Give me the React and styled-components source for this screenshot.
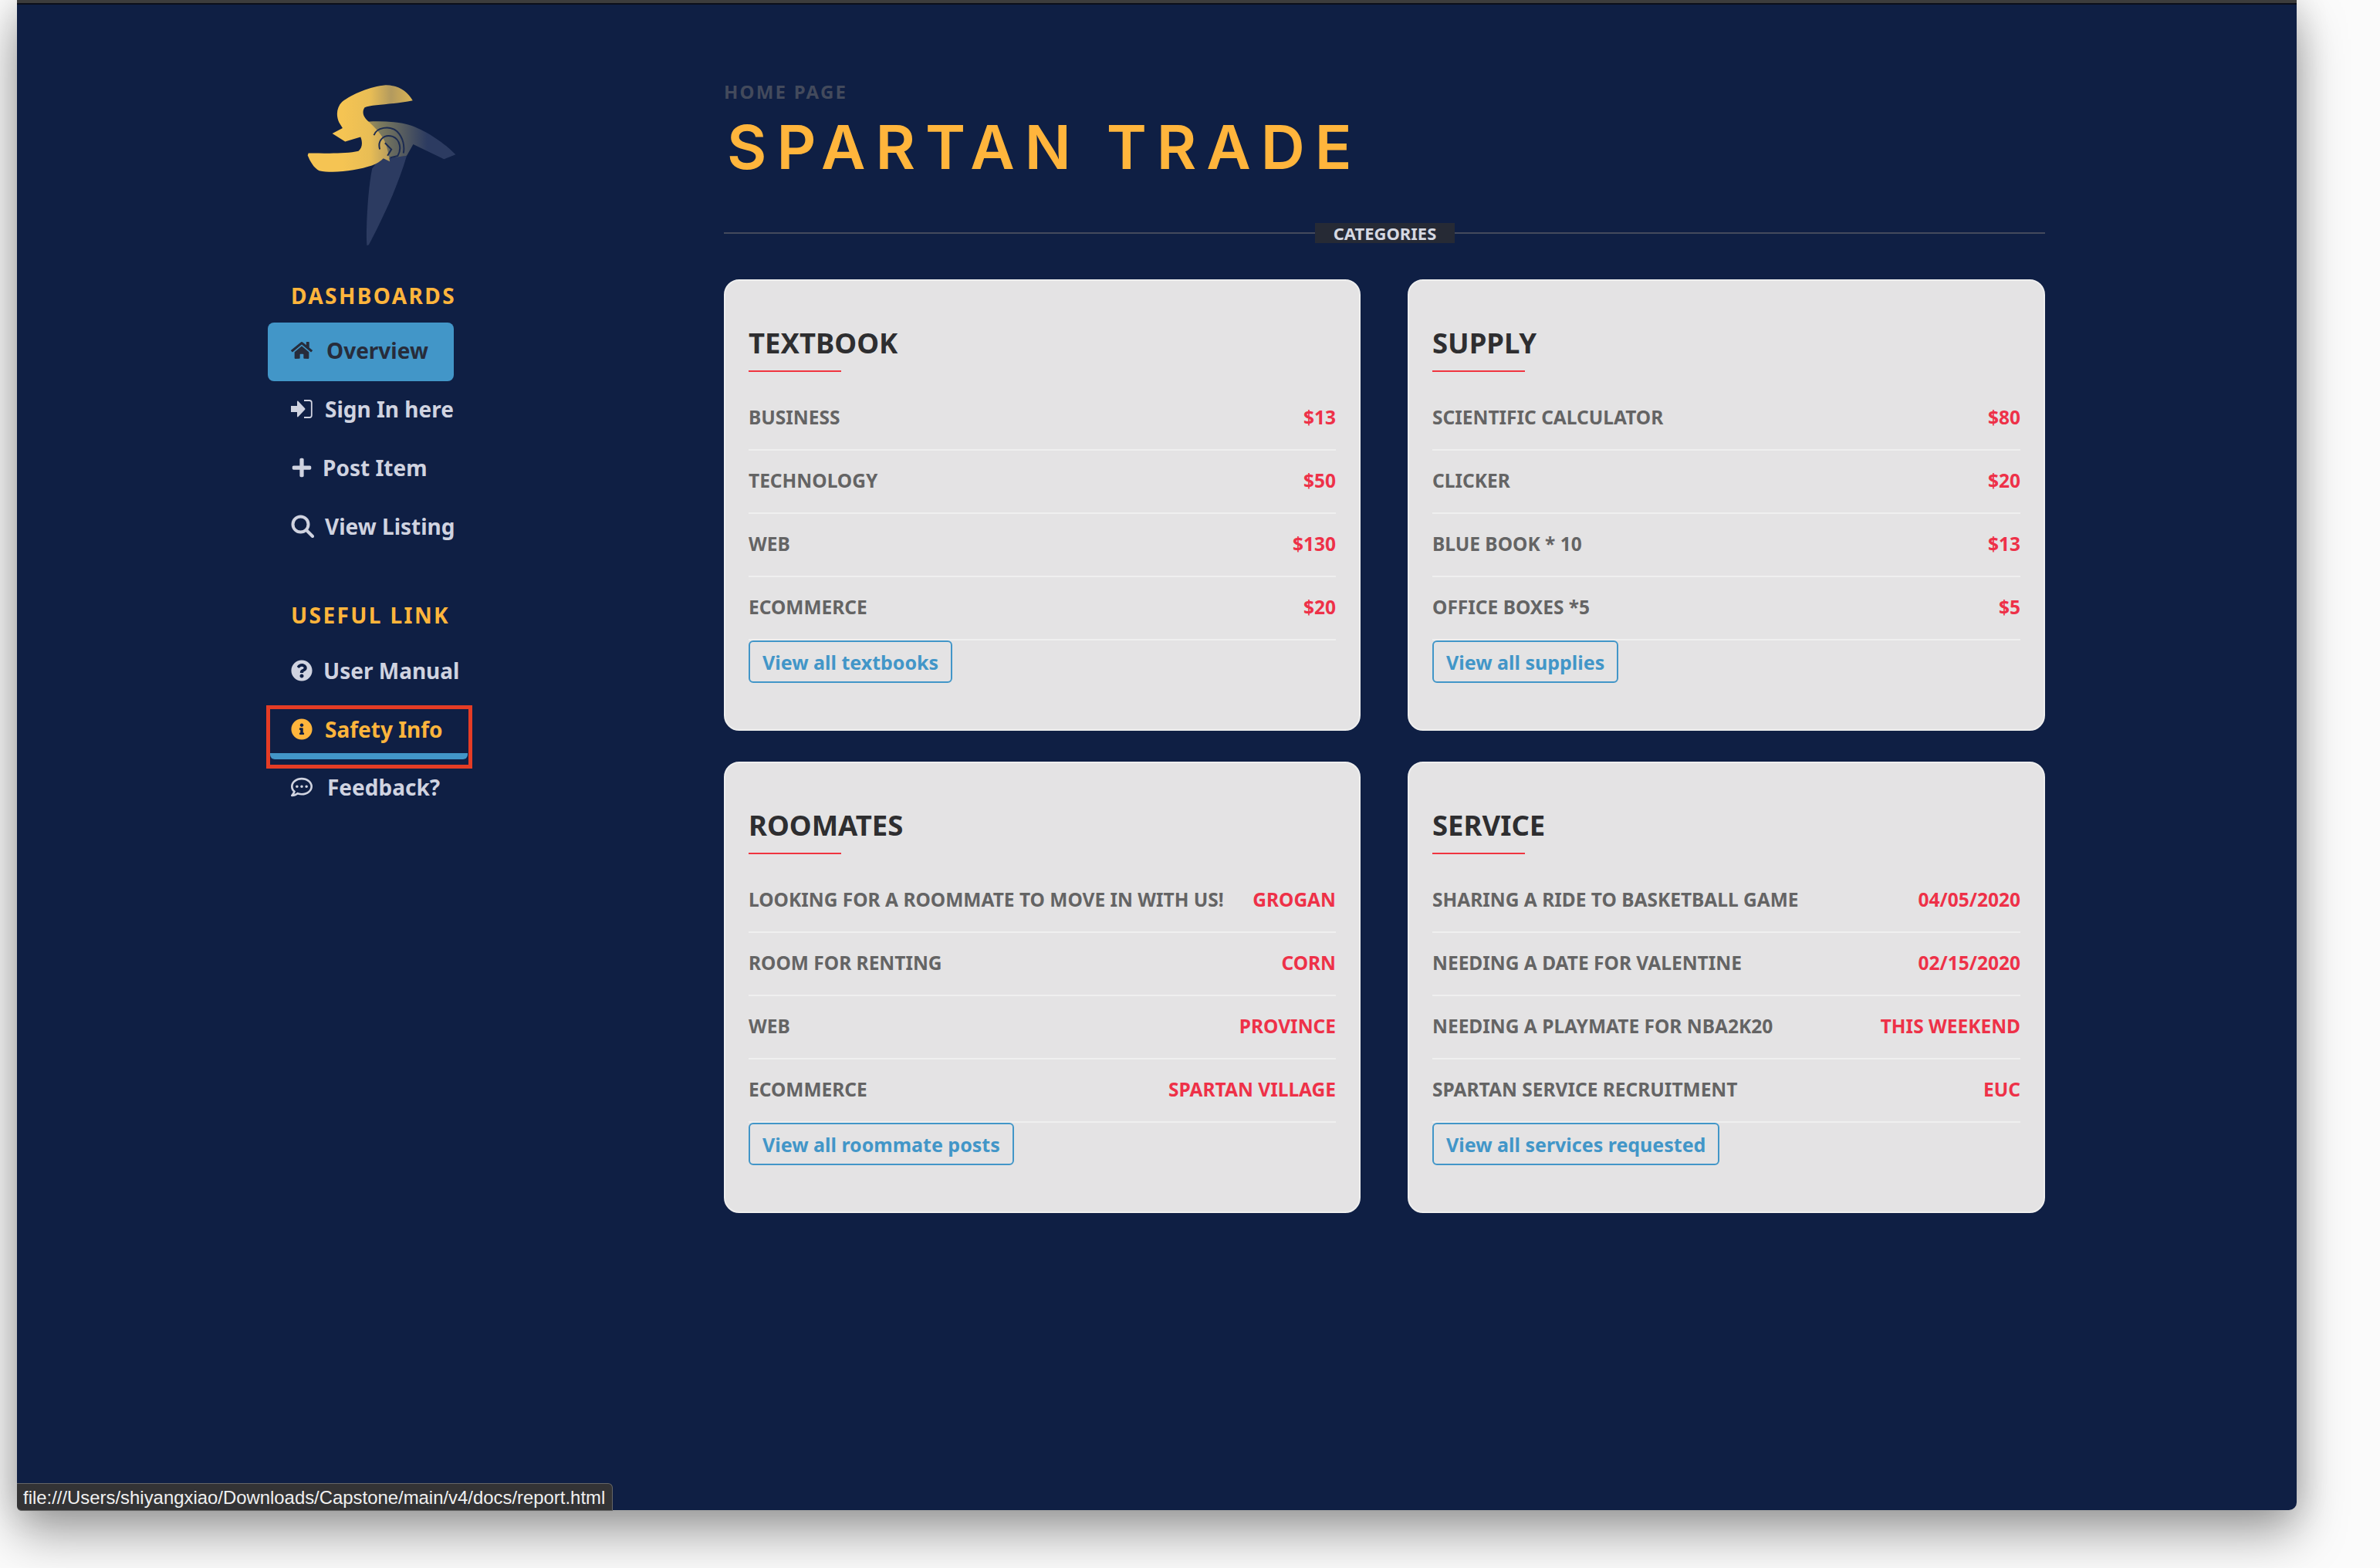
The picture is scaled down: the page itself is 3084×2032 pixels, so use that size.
import React from 'react';
import styled, { createGlobalStyle } from 'styled-components';
import { FaHome, FaPlus, FaQuestionCircle, FaInfoCircle, FaRegCommentDots } from 'react-icons/fa';

const GlobalStyle = createGlobalStyle`
    html, body {
        margin: 0;
        background: #fbfbfb;
    }
    body {
        font-family: "Noto Sans", "Open Sans", sans-serif;
        width: 3084px;
        height: 2032px;
        overflow: hidden;
    }
`;

const Stage = styled.div`
    padding-left: 22px;
`;

const Browser = styled.div`
    position: relative;
    width: 2954px;
    height: 1957px;
    box-sizing: border-box;
    background: #0f1f44;
    border-top: 4px solid #3c3c3c;
    border-radius: 0 0 10px 10px;
    box-shadow: 0 30px 64px rgba(0, 0, 0, 0.36), 0 0 44px rgba(0, 0, 0, 0.14);
`;

const TopEdge = styled.div`
    height: 2px;
    background: #0c0f1a;
`;

const Columns = styled.div`
    display: flex;
`;

const Sidebar = styled.aside`
    width: 916px;
    flex: none;
    box-sizing: border-box;
    padding: 101px 0 0 325px;
`;

const Logo = styled.svg`
    display: block;
    width: 197px;
    height: 213px;
    margin-left: 50px;
`;

const NavHeading = styled.h3`
    margin: ${(p) => p.$top}px 0 0 30px;
    height: 32px;
    font-size: 28px;
    line-height: 32px;
    font-weight: 700;
    letter-spacing: 2.4px;
    color: #ffb53c;
`;

const NavList = styled.nav`
    display: flex;
    flex-direction: column;
    margin-top: ${(p) => p.$top}px;
`;

const NavItem = styled.a`
    position: relative;
    display: flex;
    align-items: center;
    box-sizing: border-box;
    height: ${(p) => (p.$underlined ? 75 : 76)}px;
    width: ${(p) => (p.$underlined ? 256 : 241)}px;
    margin-left: ${(p) => (p.$underlined ? 3 : 0)}px;
    padding-left: ${(p) => (p.$underlined ? 27 : 30)}px;
    padding-top: ${(p) => (p.$underlined ? 5 : 0)}px;
    padding-bottom: ${(p) => (p.$underlined ? 0 : 5)}px;
    font-size: 28px;
    font-weight: 700;
    white-space: nowrap;
    color: ${(p) => (p.$active ? '#272c3b' : p.$underlined ? '#ffb53c' : '#d0d3e0')};
    background: ${(p) => (p.$active ? '#4296c8' : 'transparent')};
    border-radius: 8px;
    ${(p) => p.$underlined && `
        border-bottom: 8px solid #4296c8;
        border-radius: 0 0 6px 6px;
    `}
`;

const NavIcon = styled.span`
    display: flex;
    align-items: center;
    width: ${(p) => p.$width}px;
    flex: none;
    font-size: 28px;
`;

const Callout = styled.div`
    position: absolute;
    left: -5px;
    right: -6px;
    top: 5px;
    bottom: -20px;
    border: 5px solid #e53c25;
    pointer-events: none;
`;

const Main = styled.main`
    width: 1712px;
    flex: none;
`;

const Crumb = styled.div`
    margin-top: 100px;
    height: 26px;
    font-size: 24px;
    line-height: 26px;
    font-weight: 700;
    letter-spacing: 2.2px;
    color: #434a5c;
`;

const Title = styled.h1`
    margin: 18px 0 0 4px;
    height: 80px;
    font-family: Inter, "Noto Sans", sans-serif;
    font-size: 79px;
    line-height: 80px;
    font-weight: 600;
    letter-spacing: 13px;
    white-space: nowrap;
    color: #ffb53c;
`;

const Divider = styled.div`
    display: flex;
    align-items: center;
    margin-top: 59px;
    height: 26px;
    &::before, &::after {
        content: '';
        height: 2px;
        background: #444a5c;
    }
    &::before {
        width: 766px;
    }
    &::after {
        flex: 1;
    }
`;

const DividerLabel = styled.span`
    box-sizing: border-box;
    width: 181px;
    height: 26px;
    text-align: center;
    font-size: 22px;
    line-height: 26px;
    font-weight: 700;
    color: #d5d8e2;
    background: #262a35;
`;

const CardGrid = styled.div`
    display: grid;
    grid-template-columns: 825px 826px;
    column-gap: 61px;
    row-gap: 40px;
    margin-top: 47px;
`;

const Card = styled.section`
    box-sizing: border-box;
    height: 585px;
    padding: 55px 30px 0 30px;
    background: #e4e3e4;
    border: 2px solid #eeeeee;
    border-radius: 20px;
`;

const CardTitle = styled.h2`
    margin: 0;
    height: 50px;
    font-size: 36.5px;
    line-height: 50px;
    font-weight: 700;
    color: #2e2e30;
    &::after {
        content: '';
        display: block;
        width: 120px;
        height: 2px;
        margin-top: 11px;
        background: #f0343f;
    }
`;

const RowList = styled.div`
    margin-top: 33px;
`;

const Row = styled.div`
    display: flex;
    justify-content: space-between;
    align-items: center;
    box-sizing: border-box;
    height: 82px;
    padding-bottom: 4px;
    border-bottom: 2px solid #efefef;
    font-size: 24.5px;
    font-weight: 700;
    white-space: nowrap;
    color: #646464;
`;

const RowValue = styled.span`
    color: #ee3148;
`;

const ViewAll = styled.a`
    display: inline-flex;
    align-items: center;
    box-sizing: border-box;
    height: 55px;
    padding: 0 16px;
    font-size: 25px;
    font-weight: 700;
    white-space: nowrap;
    color: #4296c8;
    border: 2px solid #4296c8;
    border-radius: 6px;
`;

const StatusBar = styled.div`
    position: absolute;
    left: 0;
    bottom: -1px;
    box-sizing: border-box;
    width: 772px;
    height: 36px;
    padding-left: 8px;
    font-family: "Liberation Sans", Arial, sans-serif;
    font-size: 23.9px;
    line-height: 35px;
    white-space: nowrap;
    color: #f0f0f0;
    background: #333335;
    border: 1px solid #666;
    border-left: 0;
    border-radius: 0 6px 0 6px;
`;

const SignInIcon = () => (
    <svg width="28" height="24" viewBox="0 0 28 24">
        <path d="M0 8h8V2.500c0-.8 1-1.200 1.500-.6l8.700 9.400c.4.4.4 1 0 1.400l-8.700 9.400c-.5.6-1.500.2-1.500-.6V16H0z" fill="currentColor" />
        <path d="M17 1h7c1.600 0 2.800 1.200 2.800 2.800v16.400c0 1.600-1.200 2.800-2.800 2.800h-7" fill="none" stroke="currentColor" strokeWidth="1.800" />
    </svg>
);

const SearchIcon = () => (
    <svg width="30" height="30" viewBox="0 0 30 30">
        <circle cx="12.500" cy="12.500" r="10" fill="none" stroke="currentColor" strokeWidth="4" />
        <path d="M20 20l8 8" fill="none" stroke="currentColor" strokeWidth="4" strokeLinecap="round" />
    </svg>
);

const LogoMark = () => (
    <Logo viewBox="290 140 590 640">
        <defs>
            <linearGradient id="wingFade" x1="480" y1="0" x2="760" y2="0" gradientUnits="userSpaceOnUse">
                <stop offset="0" stopColor="#c8a650" />
                <stop offset="0.35" stopColor="#7c7a5e" />
                <stop offset="1" stopColor="#2c3b61" />
            </linearGradient>
            <linearGradient id="topFade" x1="430" y1="0" x2="700" y2="0" gradientUnits="userSpaceOnUse">
                <stop offset="0" stopColor="#f5c453" />
                <stop offset="0.4" stopColor="#e8bd55" />
                <stop offset="0.7" stopColor="#b39a5e" />
                <stop offset="1" stopColor="#d9b354" />
            </linearGradient>
        </defs>
        <path d="M525 775c-5-30 0-200 20-300l30-40 105-10C640 560 575 690 532 772z" fill="#2c3b61" />
        <path d="M490 296c60-8 150-8 210 12 60 22 130 70 170 112l-45 18-120-58-25 45-75 10-60-20-45-90z" fill="url(#wingFade)" />
        <path d="M703 210c-20-35-55-60-105-60-60 5-130 35-170 65-20 20-25 50-12 80l14 22-40 21 50 32 60-18c8 20 8 40-8 55-50 12-130 8-195 8l-3 8c10 25 25 50 45 60 60 12 150-2 205-20 20-8 35-18 45-28l25 12-8-40c-10-60-50-90-85-125-12-15-15-30-5-45 30-12 120-12 187-27z" fill="url(#topFade)" />
        <g fill="none" stroke="#1c2b52" strokeWidth="6">
            <path d="M552 345c10-30 60-40 90-15 25 25 30 60 25 85" />
            <path d="M575 400c-10-35 15-60 50-50 30 12 35 50 20 75l-30 8" />
            <path d="M595 375l25 25-15 25" />
        </g>
    </Logo>
);

const dashboards = [
    { label: 'Overview', icon: <FaHome />, width: 46, active: true },
    { label: 'Sign In here', icon: <SignInIcon />, width: 44 },
    { label: 'Post Item', icon: <FaPlus />, width: 41 },
    { label: 'View Listing', icon: <SearchIcon />, width: 44 },
];

const cards = [
    {
        title: 'TEXTBOOK',
        more: 'View all textbooks',
        rows: [['BUSINESS', '$13'], ['TECHNOLOGY', '$50'], ['WEB', '$130'], ['ECOMMERCE', '$20']],
    },
    {
        title: 'SUPPLY',
        more: 'View all supplies',
        rows: [['SCIENTIFIC CALCULATOR', '$80'], ['CLICKER', '$20'], ['BLUE BOOK * 10', '$13'], ['OFFICE BOXES *5', '$5']],
    },
    {
        title: 'ROOMATES',
        more: 'View all roommate posts',
        rows: [
            ['LOOKING FOR A ROOMMATE TO MOVE IN WITH US!', 'GROGAN'],
            ['ROOM FOR RENTING', 'CORN'],
            ['WEB', 'PROVINCE'],
            ['ECOMMERCE', 'SPARTAN VILLAGE'],
        ],
    },
    {
        title: 'SERVICE',
        more: 'View all services requested',
        rows: [
            ['SHARING A RIDE TO BASKETBALL GAME', '04/05/2020'],
            ['NEEDING A DATE FOR VALENTINE', '02/15/2020'],
            ['NEEDING A PLAYMATE FOR NBA2K20', 'THIS WEEKEND'],
            ['SPARTAN SERVICE RECRUITMENT', 'EUC'],
        ],
    },
];

const App = () => (
    <Stage>
        <GlobalStyle />
        <Browser>
            <TopEdge />
            <Columns>
                <Sidebar>
                    <LogoMark />
                    <NavHeading $top={47}>DASHBOARDS</NavHeading>
                    <NavList $top={19}>
                        {dashboards.map((item) => (
                            <NavItem key={item.label} $active={item.active}>
                                <NavIcon $width={item.width}>{item.icon}</NavIcon>
                                {item.label}
                            </NavItem>
                        ))}
                    </NavList>
                    <NavHeading $top={59}>USEFUL LINK</NavHeading>
                    <NavList $top={20}>
                        <NavItem>
                            <NavIcon $width={42}><FaQuestionCircle /></NavIcon>
                            User Manual
                        </NavItem>
                        <NavItem $underlined>
                            <NavIcon $width={44}><FaInfoCircle /></NavIcon>
                            Safety Info
                            <Callout />
                        </NavItem>
                        <NavItem>
                            <NavIcon $width={47}><FaRegCommentDots /></NavIcon>
                            Feedback?
                        </NavItem>
                    </NavList>
                </Sidebar>
                <Main>
                    <Crumb>HOME PAGE</Crumb>
                    <Title>SPARTAN TRADE</Title>
                    <Divider>
                        <DividerLabel>CATEGORIES</DividerLabel>
                    </Divider>
                    <CardGrid>
                        {cards.map((card) => (
                            <Card key={card.title}>
                                <CardTitle>{card.title}</CardTitle>
                                <RowList>
                                    {card.rows.map(([name, value]) => (
                                        <Row key={name}>
                                            <span>{name}</span>
                                            <RowValue>{value}</RowValue>
                                        </Row>
                                    ))}
                                </RowList>
                                <ViewAll>{card.more}</ViewAll>
                            </Card>
                        ))}
                    </CardGrid>
                </Main>
            </Columns>
            <StatusBar>file:///Users/shiyangxiao/Downloads/Capstone/main/v4/docs/report.html</StatusBar>
        </Browser>
    </Stage>
);

export default App;
